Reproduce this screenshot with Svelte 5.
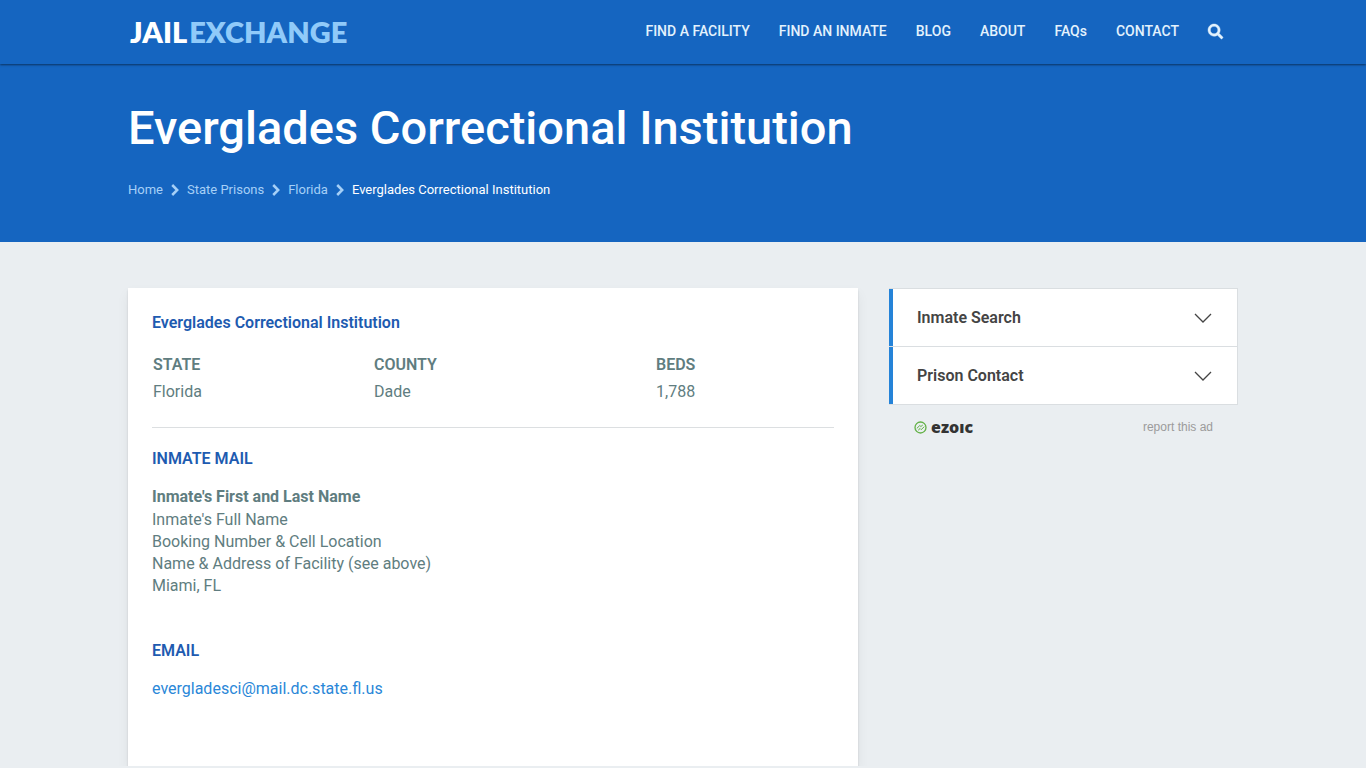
<script lang="ts">
    const navLinks = ["FIND A FACILITY", "FIND AN INMATE", "BLOG", "ABOUT", "FAQs", "CONTACT"];
    const crumbs = ["Home", "State Prisons", "Florida"];
    const facility = {
        name: "Everglades Correctional Institution",
        state: "Florida",
        county: "Dade",
        beds: 1788,
        email: "evergladesci@mail.dc.state.fl.us",
    };

    let panels = $state([
        { title: "Inmate Search", body: "Search for inmates held in this facility.", open: false },
        { title: "Prison Contact", body: facility.email, open: false },
    ]);
</script>

<header class="topbar">
    <div class="container bar">
        <a class="logo" href="/"><span>JAIL</span><span class="light">EXCHANGE</span></a>
        <nav>
            {#each navLinks as link}
                <a href="#{link}">{link}</a>
            {/each}
            <button class="search" aria-label="Search">
                <svg viewBox="0 0 512 512" width="15" height="15" fill="currentColor" stroke="currentColor" stroke-width="14">
                    <path d="M505 442.7 405.300 343c-4.500-4.500-10.600-7-17-7H372c27.600-35.300 44-79.700 44-128C416 93.100 322.900 0 208 0S0 93.100 0 208s93.100 208 208 208c48.300 0 92.700-16.400 128-44v16.300c0 6.400 2.500 12.500 7 17l99.700 99.700c9.400 9.400 24.600 9.400 33.900 0l28.300-28.300c9.400-9.400 9.400-24.600.1-34zM208 336c-70.700 0-128-57.200-128-128 0-70.700 57.200-128 128-128 70.700 0 128 57.200 128 128 0 70.700-57.200 128-128 128z" />
                </svg>
            </button>
        </nav>
    </div>
</header>

<section class="hero">
    <div class="container">
        <h1>{facility.name}</h1>
        <ol class="breadcrumb">
            {#each crumbs as crumb}
                <li>
                    <a href="#{crumb}">{crumb}</a>
                    <svg viewBox="0 0 8 12" width="8" height="12" fill="none" stroke="currentColor" stroke-width="2.5">
                        <path d="M1.200 1 6.200 6 1.200 11" />
                    </svg>
                </li>
            {/each}
            <li class="current">{facility.name}</li>
        </ol>
    </div>
</section>

<main class="container columns">
    <article class="card">
        <h2>{facility.name}</h2>
        <table>
            <thead>
                <tr><th class="state">STATE</th><th class="county">COUNTY</th><th>BEDS</th></tr>
            </thead>
            <tbody>
                <tr>
                    <td>{facility.state}</td>
                    <td>{facility.county}</td>
                    <td>{facility.beds.toLocaleString("en-US")}</td>
                </tr>
            </tbody>
        </table>
        <hr />
        <h2>INMATE MAIL</h2>
        <p class="address">
            <strong>Inmate's First and Last Name</strong>
            Inmate's Full Name<br />
            Booking Number &amp; Cell Location<br />
            Name &amp; Address of Facility (see above)<br />
            Miami, FL
        </p>
        <h2>EMAIL</h2>
        <p><a href="mailto:{facility.email}">{facility.email}</a></p>
    </article>

    <aside>
        <div class="accordion">
            {#each panels as panel}
                <div class="panel">
                    <button aria-expanded={panel.open} onclick={() => (panel.open = !panel.open)}>
                        {panel.title}
                        <svg class:flipped={panel.open} viewBox="0 0 18 10" width="18" height="10" fill="none" stroke="#444" stroke-width="1.3">
                            <path d="M1 1 9 9 17 1" />
                        </svg>
                    </button>
                    {#if panel.open}
                        <div class="panel-body">{panel.body}</div>
                    {/if}
                </div>
            {/each}
        </div>
        <div class="ad-row">
            <a class="ezoic" href="#ezoic">
                <svg viewBox="0 0 13 13" width="13" height="13" fill="none" stroke="#62b146">
                    <circle cx="6.500" cy="6.500" r="5.500" stroke-width="1.300" />
                    <path d="M2.800 7.400 5.800 4.500 6.900 5.500 8.800 4M4.200 9.200 6.100 7.500 7.200 8.600 10.300 5.700" stroke-width="1" />
                </svg>
                <span>ezoıc</span>
            </a>
            <a class="report" href="#report">report this ad</a>
        </div>
    </aside>
</main>

<style>
    :global(body) {
        background: #eaeef1;
        color: #607d80;
        font-family: Roboto, "Liberation Sans", sans-serif;
        font-size: 16px;
        line-height: 22px;
    }

    a {
        color: inherit;
        text-decoration: none;
    }

    button {
        border: 0;
        background: none;
        color: inherit;
        font: inherit;
        cursor: pointer;
    }

    svg {
        display: block;
        flex: none;
        overflow: visible;
    }

    .container {
        box-sizing: border-box;
        max-width: 1140px;
        margin: 0 auto;
        padding: 0 15px;
    }

    .topbar {
        position: relative;
        background: #1565c0;
        box-shadow: 0 1px 2px rgba(0, 0, 0, 0.5);
    }

    .bar {
        display: flex;
        align-items: center;
        justify-content: space-between;
        height: 64px;
    }

    .logo {
        display: flex;
        gap: 2px;
        padding-left: 2px;
        color: #fff;
        font-family: Lato, "Open Sans", sans-serif;
        font-size: 29px;
        font-weight: 800;
        line-height: 40px;
    }

    .light {
        color: #90caf9;
    }

    nav {
        display: flex;
        align-items: center;
        gap: 29px;
        padding: 0 15px 2px 0;
        color: #e3f2fd;
        font-size: 14px;
        font-weight: 500;
    }

    .search {
        padding: 0;
    }

    .hero {
        padding: 35px 0 41px;
        background: #1565c0;
    }

    h1 {
        margin: 0 0 22px;
        color: #fff;
        font-size: 47px;
        font-weight: 500;
        line-height: 58px;
    }

    .breadcrumb {
        display: flex;
        flex-wrap: wrap;
        gap: 8px;
        margin: 0;
        padding: 0;
        list-style: none;
        color: #a6d0f7;
        font-size: 13px;
    }

    .breadcrumb li {
        display: flex;
        align-items: center;
        gap: 8px;
    }

    .breadcrumb .current {
        color: #fff;
    }

    .columns {
        display: grid;
        grid-template-columns: minmax(0, 730fr) minmax(0, 349fr);
        align-items: start;
        gap: 31px;
        padding-top: 46px;
    }

    .card {
        padding: 24px 24px 66px;
        background: #fff;
        box-shadow:
            0 2px 2px rgba(0, 0, 0, 0.12),
            0 6px 12px rgba(0, 0, 0, 0.06);
    }

    h2 {
        margin: 0 0 16px;
        color: #1e5bb0;
        font-size: 16px;
        font-weight: 600;
        line-height: 22px;
    }

    table {
        width: 100%;
        margin-top: 17px;
        border-collapse: collapse;
        line-height: 25px;
    }

    th,
    td {
        padding: 1px;
        text-align: left;
    }

    th {
        font-weight: 600;
    }

    .state {
        width: 219px;
    }

    .county {
        width: 280px;
    }

    hr {
        margin: 22px 0 20px;
        border: 0;
        border-top: 1px solid #dcdfe1;
    }

    p {
        margin: 0;
    }

    .address {
        margin-bottom: 43px;
    }

    strong {
        display: block;
        margin-bottom: 1px;
        font-weight: 700;
    }

    p a {
        color: #2a87d8;
    }

    .accordion {
        border: 1px solid #dadee1;
        border-left: 0;
        background: #fff;
        color: #444;
    }

    .panel + .panel {
        border-top: 1px solid #dadee1;
    }

    .panel button {
        display: flex;
        align-items: center;
        justify-content: space-between;
        width: 100%;
        height: 57px;
        padding: 0 25px 0 24px;
        border-left: 4px solid #2583d8;
        font-weight: 600;
    }

    .panel-body {
        padding: 8px 24px 16px;
    }

    .flipped {
        transform: rotate(180deg);
    }

    .ad-row {
        display: flex;
        align-items: center;
        justify-content: space-between;
        padding: 11px 25px;
        font-size: 12px;
    }

    .ezoic {
        display: flex;
        align-items: center;
        gap: 4px;
        color: #333;
        font-family: "Open Sans", "Noto Sans", sans-serif;
        font-size: 16px;
        font-weight: 800;
    }

    .report {
        color: #9b9b9b;
        font-family: "Liberation Sans", Arial, sans-serif;
    }

    @media (max-width: 900px) {
        .bar {
            flex-wrap: wrap;
            height: auto;
        }

        nav {
            flex-wrap: wrap;
            gap: 16px;
        }

        .columns {
            grid-template-columns: minmax(0, 1fr);
        }
    }
</style>
